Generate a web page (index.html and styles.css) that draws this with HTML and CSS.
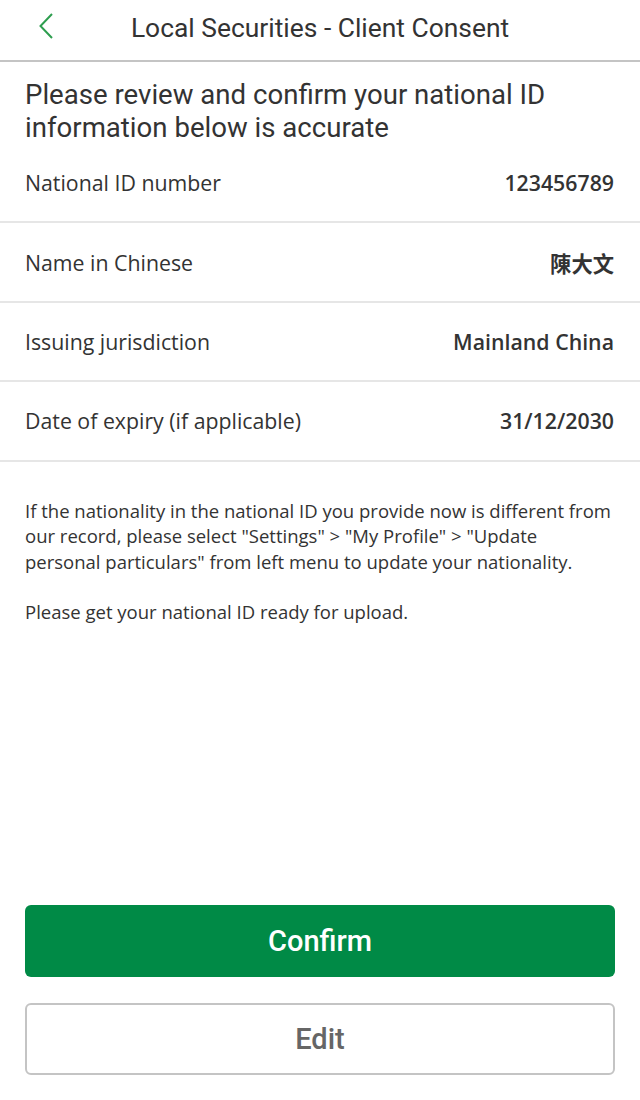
FILE: index.html
```html
<!DOCTYPE html>
<html lang="en">
<head>
    <meta charset="UTF-8">
    <meta name="viewport" content="width=device-width, initial-scale=1.0">
    <title>Local Securities - Client Consent</title>
    <link rel="stylesheet" href="styles.css">
</head>
<body>
    <div class="page">
        <div class="topbar">
            <span class="back">
                <svg width="16" height="26" viewBox="0 0 16 26"><path d="M14 1 L2.5 13 L14 25" fill="none" stroke="#2e9e4f" stroke-width="2"/></svg>
            </span>
            <p class="title">Local Securities - Client Consent</p>
        </div>
        <h1 class="heading">Please review and confirm your national ID information below is accurate</h1>
        <div class="rows">
            <div class="row"><span>National ID number</span><b>123456789</b></div>
            <div class="row"><span>Name in Chinese</span><b class="cjk">陳大文</b></div>
            <div class="row"><span>Issuing jurisdiction</span><b>Mainland China</b></div>
            <div class="row"><span>Date of expiry (if applicable)</span><b>31/12/2030</b></div>
        </div>
        <div class="notes">
            <p>If the nationality in the national ID you provide now is different from our record, please select "Settings" &gt; "My Profile" &gt; "Update personal particulars" from left menu to update your nationality.</p>
            <p>Please get your national ID ready for upload.</p>
        </div>
        <div class="actions">
            <button class="confirm-btn">Confirm</button>
            <button class="edit-btn">Edit</button>
        </div>
    </div>
</body>
</html>
```

FILE: styles.css
```css
body {
    margin: 0;
    background: #fff;
    font-family: "Open Sans", sans-serif;
    color: #333;
}
.page {
    display: flex;
    flex-direction: column;
    min-height: 1100px;
}
.topbar {
    position: relative;
    height: 60px;
    display: flex;
    align-items: center;
    justify-content: center;
    border-bottom: 2px solid #c4c4c4;
}
.back {
    position: absolute;
    left: 38px;
    top: 13px;
}
.title {
    margin: 0;
    font-family: Roboto, sans-serif;
    font-size: 26.4px;
    color: #333;
    padding-bottom: 4px;
}
.heading {
    margin: 0;
    padding: 16px 25px 0;
    font-family: Roboto, sans-serif;
    font-weight: 400;
    font-size: 27.6px;
    line-height: 33px;
    color: #333;
}
.row {
    display: flex;
    justify-content: space-between;
    align-items: center;
    height: 77.4px;
    padding: 0 26px 0 25px;
    border-bottom: 2px solid #e6e6e6;
    font-size: 21.3px;
}
.row b {
    font-weight: 600;
}
.cjk {
    font-family: "Noto Sans CJK TC", sans-serif;
    font-weight: 500;
}
.notes {
    padding: 36px 25px 0;
    font-size: 18.5px;
    line-height: 25.5px;
}
.notes p {
    margin: 0 0 25px;
}
.actions {
    margin-top: auto;
    padding: 0 25px 25px;
    display: flex;
    flex-direction: column;
    gap: 26px;
}
button {
    height: 72px;
    border-radius: 6px;
    font-family: Roboto, sans-serif;
    font-size: 29px;
    font-weight: 500;
    cursor: pointer;
}
.confirm-btn {
    background: #008a46;
    color: white;
    border: none;
}
.edit-btn {
    background: #fff;
    color: #666;
    border: 2px solid #c4c4c4;
}
```
